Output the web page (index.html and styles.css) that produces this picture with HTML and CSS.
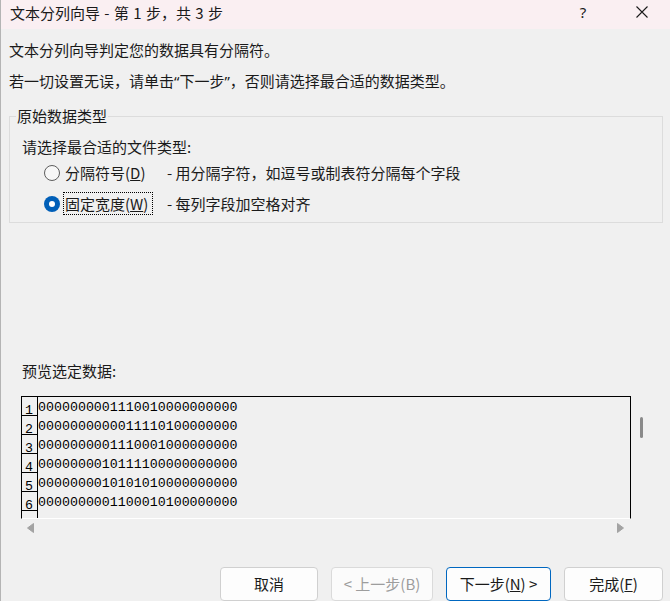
FILE: index.html
```html
<!DOCTYPE html>
<html lang="zh-CN">
<head>
<meta charset="utf-8">
<title>文本分列向导</title>
<link rel="stylesheet" href="styles.css">
</head>
<body>
<div class="win">
  <header class="titlebar">
    <span class="title">文本分列向导 - 第 1 步，共 3 步</span>
    <span class="tb-btn help">?</span>
    <span class="tb-btn close"><svg width="12" height="12" viewBox="0 0 12 12"><path d="M0.5 0.5L11.5 11.5M11.5 0.5L0.5 11.5" stroke="#1a1a1a" stroke-width="1.1" fill="none"/></svg></span>
  </header>
  <main class="content">
    <p class="line first">文本分列向导判定您的数据具有分隔符。</p>
    <p class="line second">若一切设置无误，请单击<span class="q">“</span>下一步<span class="q">”</span>，否则请选择最合适的数据类型。</p>
    <fieldset class="group">
      <legend>原始数据类型</legend>
      <div class="prompt">请选择最合适的文件类型:</div>
      <div class="opt">
        <span class="radio"></span>
        <span class="opt-label">分隔符号(<u>D</u>)</span>
        <span class="opt-desc">- 用分隔字符，如逗号或制表符分隔每个字段</span>
      </div>
      <div class="opt">
        <span class="radio checked"></span>
        <span class="opt-label focus">固定宽度(<u>W</u>)</span>
        <span class="opt-desc">- 每列字段加空格对齐</span>
      </div>
    </fieldset>
    <div class="preview-label">预览选定数据:</div>
    <div class="preview-wrap">
      <div class="preview">
        <div class="row"><span class="num">1</span><span class="data">0000000001110010000000000</span></div>
        <div class="row"><span class="num">2</span><span class="data">0000000000011110100000000</span></div>
        <div class="row"><span class="num">3</span><span class="data">0000000001110001000000000</span></div>
        <div class="row"><span class="num">4</span><span class="data">0000000010111100000000000</span></div>
        <div class="row"><span class="num">5</span><span class="data">0000000010101010000000000</span></div>
        <div class="row"><span class="num">6</span><span class="data">0000000001100010100000000</span></div>
        <div class="row"><span class="num"></span><span class="data"></span></div>
      </div>
      <div class="vscroll"><span class="thumb"></span></div>
    </div>
    <div class="hscroll">
      <svg width="7" height="10" viewBox="0 0 7 10"><path d="M6.5 0.5 L6.5 9.5 L0.5 5 Z" fill="#a3a3a3" stroke="#a3a3a3" stroke-linejoin="round"/></svg>
      <svg width="7" height="10" viewBox="0 0 7 10"><path d="M0.5 0.5 L0.5 9.5 L6.5 5 Z" fill="#a3a3a3" stroke="#a3a3a3" stroke-linejoin="round"/></svg>
    </div>
    <div class="buttons">
      <button class="btn w-cancel" type="button">取消</button>
      <button class="btn w-prev" type="button" disabled>&lt; 上一步(B)</button>
      <button class="btn w-next primary" type="button">下一步(<u>N</u>) &gt;</button>
      <button class="btn w-finish" type="button">完成(<u>F</u>)</button>
    </div>
  </main>
</div>
</body>
</html>
```

FILE: styles.css
```css
html, body {
  margin: 0;
  padding: 0;
  overflow: hidden;
}

body {
  width: 670px;
  height: 601px;
  background: #f0f0f0;
  font-family: "Noto Sans CJK SC", "Noto Sans", sans-serif;
  font-size: 15px;
  color: #1a1a1a;
}

.win {
  width: 670px;
  height: 601px;
  box-sizing: border-box;
  border-left: 1px solid #b4b4b4;
  background: #f0f0f0;
  overflow: hidden;
}

.titlebar {
  height: 29px;
  background: #faeff2;
  display: flex;
  align-items: center;
  padding-left: 9px;
  padding-right: 8px;
}

.title {
  line-height: 20px;
  margin-top: -4px;
  word-spacing: 1px;
}

.help {
  margin-left: auto;
  width: 40px;
  text-align: center;
  font-family: "Noto Sans", sans-serif;
  font-size: 15px;
  line-height: 20px;
  margin-top: -5px;
}

.close {
  width: 40px;
  margin-left: 19px;
  display: flex;
  justify-content: center;
  margin-top: -5px;
}

.content {
  padding-left: 8px;
}

.line {
  margin: 11px 0 0 0;
  line-height: 20px;
}

.q {
  font-family: "Noto Sans", sans-serif;
}

.group {
  margin: 15px 0 0 0;
  width: 654px;
  box-sizing: border-box;
  border: 1px solid #dcdcdc;
  padding: 0 0 3px 12px;
  min-inline-size: 0;
}

.group legend {
  padding: 0 1px;
  margin-left: -6px;
  line-height: 20px;
}

.prompt {
  margin-top: 11px;
  line-height: 20px;
}

.opt {
  display: flex;
  align-items: center;
  height: 31px;
  padding-left: 22px;
}

.radio {
  width: 16px;
  height: 16px;
  box-sizing: border-box;
  border-radius: 50%;
  border: 1px solid #5d5d5d;
  background: #f7f7f7;
  flex: none;
}

.radio.checked {
  border: none;
  background: #005fb8;
  display: flex;
  align-items: center;
  justify-content: center;
}

.radio.checked::after {
  content: "";
  width: 6px;
  height: 6px;
  border-radius: 50%;
  background: #fff;
}

.opt-label {
  margin-left: 3px;
  width: 90px;
  box-sizing: border-box;
  padding: 0 1px;
  border: 1px dotted transparent;
  line-height: 21px;
}

.opt-label.focus {
  border-color: #000;
}

.opt-desc {
  margin-left: 14px;
  line-height: 21px;
}

.preview-label {
  margin: 138px 0 0 13px;
  line-height: 20px;
}

.preview-wrap {
  margin: 15px 0 0 12px;
  display: flex;
}

.preview {
  width: 610px;
  height: 123px;
  box-sizing: border-box;
  border: 1px solid #000;
  border-bottom: 1px solid #fff;
  overflow: hidden;
  font-family: "Liberation Mono", monospace;
  font-size: 13.3px;
  color: #000;
}

.row {
  display: flex;
  height: 19px;
}

.num {
  width: 16px;
  height: 19px;
  box-sizing: border-box;
  border-right: 1px solid #000;
  border-bottom: 1px solid #000;
  padding-left: 3px;
  display: flex;
  align-items: flex-end;
  line-height: 8px;
}

.data {
  line-height: 19px;
  padding-top: 1px;
}

.vscroll {
  padding: 21px 0 0 9px;
}

.thumb {
  display: block;
  width: 3px;
  height: 21px;
  border-radius: 2px;
  background: #8a8a8a;
}

.hscroll {
  margin-left: 12px;
  width: 610px;
  height: 18px;
  box-sizing: border-box;
  padding: 4px 7px 0 6px;
  display: flex;
  justify-content: space-between;
  align-items: flex-start;
}

.buttons {
  margin-top: 30px;
  display: flex;
  justify-content: flex-end;
  gap: 13px;
  padding-right: 7px;
}

.btn {
  height: 34px;
  box-sizing: border-box;
  border: 1px solid #d0d0d0;
  border-radius: 4px;
  background: #fdfdfd;
  font-family: "Noto Sans CJK SC", "Noto Sans", sans-serif;
  font-size: 15px;
  line-height: 32px;
  color: #1a1a1a;
  padding: 0;
  text-align: center;
}

.btn:disabled {
  color: #9d9d9d;
  background: #fbfbfb;
  border-color: #dadada;
}

.btn.primary {
  border-color: #0067c0;
}

.w-cancel { width: 98px; }
.w-prev { width: 102px; }
.w-next { width: 105px; }
.w-finish { width: 99px; }
```
